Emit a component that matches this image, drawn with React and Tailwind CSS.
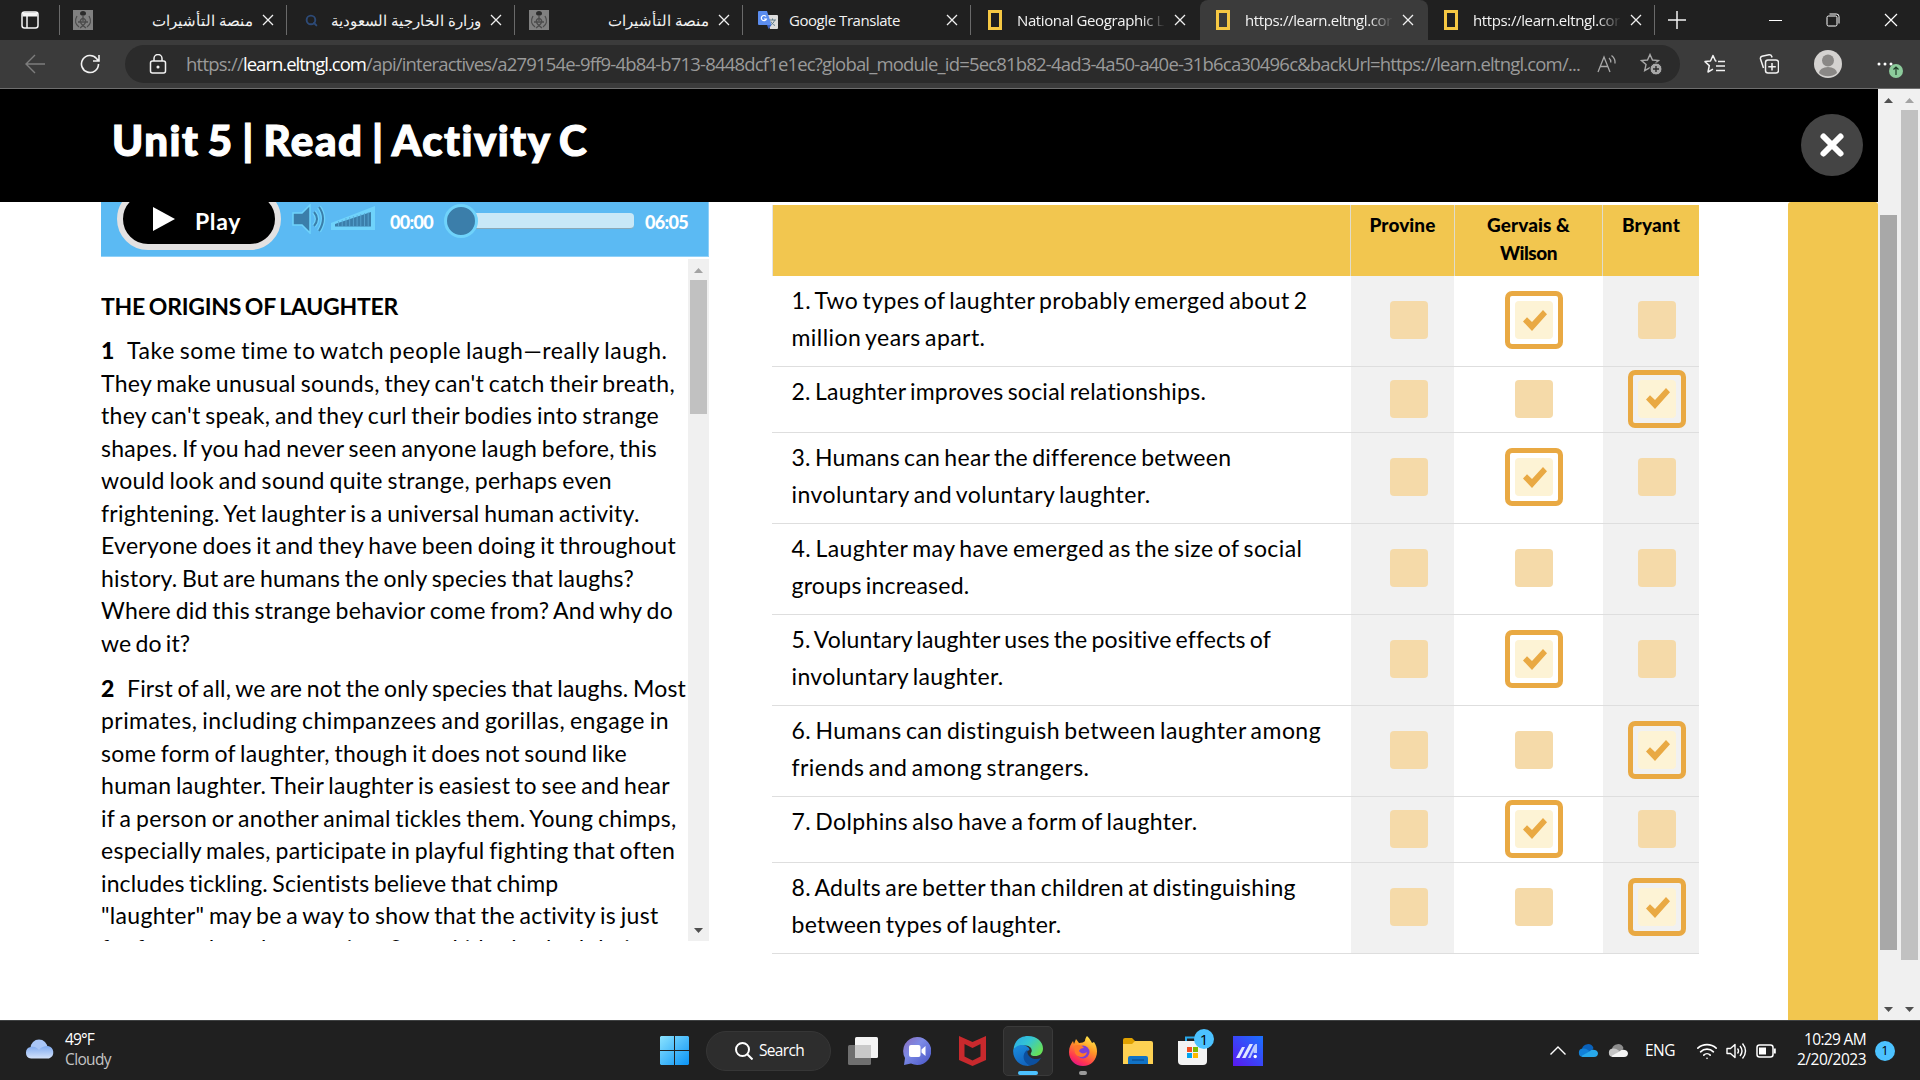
import { useLayoutEffect, useRef, useState } from "react";
import { Search, Wifi, Volume2 } from "lucide-react";

/* A single line of text tracked so that it spans exactly `w` pixels. */
function Fit({ w, children, className = "", dir }) {
  const ref = useRef(null);
  const [spacing, setSpacing] = useState(0);
  useLayoutEffect(() => {
    const natural = ref.current.getBoundingClientRect().width;
    setSpacing((w - natural) / String(children).length);
  }, []);
  return (
    <span
      ref={ref}
      dir={dir}
      className={`inline-block whitespace-pre shrink-0 ${className}`}
      style={dir === "rtl" ? undefined : { letterSpacing: spacing }}
    >
      {children}
    </span>
  );
}

function Cross({ className = "" }) {
  return (
    <svg viewBox="0 0 12 12" className={`size-3 shrink-0 ${className}`} fill="none" stroke="#f0f0f0" strokeWidth="1.3">
      <path d="M1 1 11 11M11 1 1 11" />
    </svg>
  );
}

function Emblem() {
  return (
    <svg viewBox="0 0 20 20" className="size-5 shrink-0">
      <rect width="20" height="20" fill="#808080" />
      <path d="M10 1c2 0 3 1 3 2.500s-1 2-3 2-3-.5-3-2S8 1 10 1Z" fill="#2b2b2b" />
      <path d="M10 5v6M4 6c-3 5-1 9 2 11M16 6c3 5 1 9-2 11M10 8c4 2 4 5-3 10M10 8c-4 2-4 5 3 10M5 12h10" fill="none" stroke="#4b4b4b" strokeWidth="1.300" />
    </svg>
  );
}

function GoogleTranslate() {
  return (
    <svg viewBox="0 0 20 20" className="size-5 shrink-0">
      <path d="M8 5h11a1 1 0 0 1 1 1v12a1 1 0 0 1-1 1h-7Z" fill="#dcdcdc" />
      <path d="M11 10h7M14.500 8.500V10M16.500 10c-.5 2.500-2 4-4 5M13 11.500c1 2 2 3 4 4" stroke="#607d8b" fill="none" />
      <path d="M1 1h8l4.500 14H1a1 1 0 0 1-1-1V2a1 1 0 0 1 1-1Z" fill="#5b8def" />
      <path d="M8 6.500A2.600 2.600 0 1 0 8.400 9H6" fill="none" stroke="#fff" strokeWidth="1.200" />
      <path d="m9 15 4.500 0-3 4Z" fill="#3a62c4" />
    </svg>
  );
}

const NatGeo = () => <span className="block h-5 w-[14px] border-[3px] border-[#f6c843] shrink-0" />;

function Tab({ icon, title, w, active, rtl, fade, divider = true, narrowIcon }) {
  return (
    <div className={`flex h-10 w-[228px] items-center shrink-0 ${active ? "rounded-t-lg bg-[#3b3b3b]" : ""}`}>
      <div className={`flex w-[45px] items-center ${narrowIcon ? "pl-4" : rtl ? "pl-[13px]" : "pl-[14px]"}`}>{icon}</div>
      <div className={`flex w-[148px] items-center text-[15px] leading-5 text-[#f2f2f2] ${rtl ? "justify-end text-[#cfcfcf]" : ""} ${fade ? "[mask-image:linear-gradient(to_right,#000_84%,transparent_100%)]" : ""}`}>
        <Fit w={w} dir={rtl ? "rtl" : undefined} className={rtl ? "text-[14.7px]" : ""}>{title}</Fit>
      </div>
      <Cross className="ml-[9px]" />
      {divider && <span className="ml-3 h-[30px] w-px bg-[#6a6a6a]" />}
    </div>
  );
}

function TabStrip() {
  return (
    <div className="flex h-10 items-center bg-[#202020]">
      <div className="flex w-[60px] items-center pl-[21px]">
        <svg viewBox="0 0 18 18" className="size-[18px]" fill="none" stroke="#f5f5f5" strokeWidth="1.500">
          <rect x="1" y="1" width="16" height="16" rx="2.500" />
          <path d="M1.500 3.500h15" strokeWidth="4" />
          <path d="M6 5v12" />
        </svg>
        <span className="ml-5 h-[30px] w-px bg-[#6a6a6a]" />
      </div>
      <Tab icon={<Emblem />} title="منصة التأشيرات" w={97} rtl />
      <Tab icon={<Search className="ml-1 size-[13px] text-[#2d4a77]" strokeWidth={3.5} />} title="وزارة الخارجية السعودية" w={142} rtl />
      <Tab icon={<Emblem />} title="منصة التأشيرات" w={97} rtl />
      <Tab icon={<GoogleTranslate />} title="Google Translate" w={111} />
      <Tab icon={<NatGeo />} title="National Geographic L" w={147} fade divider={false} narrowIcon />
      <Tab icon={<NatGeo />} title="https://learn.eltngl.cor" w={147} fade active divider={false} narrowIcon />
      <Tab icon={<NatGeo />} title="https://learn.eltngl.cor" w={147} fade narrowIcon />
      <svg viewBox="0 0 18 18" className="ml-3 size-[18px]" stroke="#f2f2f2" strokeWidth="1.500">
        <path d="M9 0v18M0 9h18" />
      </svg>
      <div className="ml-auto flex items-center gap-[44px] pr-[22px]">
        <span className="h-px w-[13px] bg-white" />
        <svg viewBox="0 0 14 14" className="size-[14px]" fill="none" stroke="#fff">
          <rect x="1" y="3" width="10" height="10" rx="1.500" />
          <path d="M3.500 1h7a2.500 2.500 0 0 1 2.500 2.500v7" />
        </svg>
        <svg viewBox="0 0 14 14" className="size-[14px]" fill="none" stroke="#fff" strokeWidth="1.200">
          <path d="M1 1 13 13M13 1 1 13" />
        </svg>
      </div>
    </div>
  );
}

const STAR = "M10 1.500 12.500 7l6 .6-4.500 4 1.300 6L10 14.600 4.700 17.600l1.300-6-4.500-4 6-.6Z";

function Toolbar() {
  return (
    <div className="flex h-[49px] items-center border-b border-[#6e6e6e] bg-[#3b3b3b] pb-px">
      <svg viewBox="0 0 20 20" className="ml-[25px] size-5" fill="none" stroke="#7d7d7d" strokeWidth="1.400">
        <path d="M20 10H1M10 1 1 10l9 9" />
      </svg>
      <svg viewBox="0 0 20 20" className="ml-[35px] size-5" fill="none" stroke="#f2f2f2" strokeWidth="1.600">
        <path d="M18.500 10a8.500 8.500 0 1 1-2-5.500L18.500 7M19 1v6h-6" />
      </svg>
      <div className="ml-[25px] flex h-[38px] w-[1555px] items-center rounded-full bg-[#2b2b2b] pl-[24px]">
        <svg viewBox="0 0 18 20" className="h-5 w-[18px]" fill="none" stroke="#f2f2f2" strokeWidth="1.500">
          <rect x="1.500" y="7" width="15" height="12" rx="2" />
          <path d="M5 7V4.500a4 4 0 0 1 8 0V7" />
          <circle cx="9" cy="13" r=".8" fill="#fff" />
        </svg>
        <div className="ml-[19px] flex text-[18.500px] leading-6 text-[#9a9a9a]">
          <Fit w={57}>https://</Fit>
          <Fit w={123} className="text-white">learn.eltngl.com</Fit>
          <Fit w={1214}>/api/interactives/a279154e-9ff9-4b84-b713-8448dcf1e1ec?global_module_id=5ec81b82-4ad3-4a50-a40e-31b6ca30496c&backUrl=https://learn.eltngl.com/...</Fit>
        </div>
        <svg viewBox="0 0 20 20" className="ml-[17px] size-5" fill="none" stroke="#a8a8a8" strokeWidth="1.300">
          <path d="m1 18 6-15 6 15M3 12.500h8M12 4q2 1.500 1.800 4.500M14.500 1.500q4 3 3.500 8" />
        </svg>
        <svg viewBox="0 0 22 22" className="ml-[23px] size-[22px]" fill="none" stroke="#a8a8a8" strokeWidth="1.400">
          <path d={STAR} />
          <circle cx="16" cy="16" r="6" fill="#a8a8a8" stroke="#2b2b2b" strokeWidth="1" />
          <path d="M16 13v6M13 16h6" stroke="#2b2b2b" />
        </svg>
      </div>
      <svg viewBox="0 0 22 20" className="ml-6 h-5 w-[22px]" fill="none" stroke="#f2f2f2" strokeWidth="1.500" strokeLinejoin="round">
        <path d="M12.500 7 11.500 7 9 1.500 6.500 7l-5.500.6 4.300 4L4 18l5-2.800M14 7.500h7M12 12h9M12 16.500h9" />
      </svg>
      <svg viewBox="0 0 20 20" className="ml-[33px] size-5" fill="none" stroke="#f2f2f2" strokeWidth="1.500">
        <rect x="6.500" y="6" width="13" height="13" rx="2.500" />
        <path d="M13 9v7.500M9.300 12.700h7.500M4.500 14 1.500 5q-.5-2 1.500-2.800L10 .8q2-.3 2.800 1.700L13 3.500" />
      </svg>
      <svg viewBox="0 0 28 28" className="ml-[35px] size-7">
        <circle cx="14" cy="14" r="14" fill="#d4d2d0" />
        <circle cx="14" cy="10.500" r="6" fill="#8a8886" />
        <path d="M5 23a9 6 0 0 1 18 0 14 14 0 0 1-18 0Z" fill="#8a8886" />
      </svg>
      <svg viewBox="0 0 28 30" className="ml-[34px] h-[30px] w-7">
        <circle cx="3" cy="15" r="1.500" fill="#fff" />
        <circle cx="9" cy="15" r="1.500" fill="#fff" />
        <circle cx="15" cy="15" r="1.500" fill="#fff" />
        <circle cx="20" cy="22" r="7" fill="#8ccb9b" />
        <path d="M20 26v-8M17.500 20.500 20 18l2.500 2.500" stroke="#1f3d28" strokeWidth="1.200" fill="none" />
      </svg>
    </div>
  );
}

const PARA_ONE = [
  ["They make unusual sounds, they can't catch their breath,", 574],
  ["they can't speak, and they curl their bodies into strange", 558],
  ["shapes. If you had never seen anyone laugh before, this", 556],
  ["would look and sound quite strange, perhaps even", 511],
  ["frightening. Yet laughter is a universal human activity.", 539],
  ["Everyone does it and they have been doing it throughout", 575],
  ["history. But are humans the only species that laughs?", 533],
  ["Where did this strange behavior come from? And why do", 572],
  ["we do it?", 89],
];

const PARA_TWO = [
  ["primates, including chimpanzees and gorillas, engage in", 568],
  ["some form of laughter, though it does not sound like", 526],
  ["human laughter. Their laughter is easiest to see and hear", 569],
  ["if a person or another animal tickles them. Young chimps,", 576],
  ["especially males, participate in playful fighting that often", 574],
  ["includes tickling. Scientists believe that chimp", 458],
  ["\"laughter\" may be a way to show that the activity is just", 558],
  ["for fun and can be amusing. Some kids also had their", 538],
];

function Paragraph({ n, first, firstWidth, lines }) {
  return (
    <div>
      <div className="flex h-[32.5px]">
        <span className="w-[26px] font-black">{n}</span>
        <Fit w={firstWidth}>{first}</Fit>
      </div>
      {lines.map(([t, w]) => (
        <div key={t} className="h-[32.5px]"><Fit w={w}>{t}</Fit></div>
      ))}
    </div>
  );
}

const Up = ({ color = "#505050" }) => (
  <svg viewBox="0 0 9 5" className="h-[5px] w-[9px]" fill={color}><path d="M4.500 0 9 5H0Z" /></svg>
);
const Down = () => (
  <svg viewBox="0 0 9 5" className="h-[5px] w-[9px]" fill="#505050"><path d="M0 0h9L4.500 5Z" /></svg>
);

function Player() {
  return (
    <div className="flex h-[55px] w-[608px] overflow-hidden border-b border-r border-[#8fd0f8] bg-[#5bbaf3]">
      <div className="-mt-[14px] ml-4 flex h-[62px] w-[164px] shrink-0 items-center rounded-[31px] border-[6px] border-[#e3e1e1] bg-black pl-[30px]">
        <svg viewBox="0 0 22 24" className="h-6 w-[22px]" fill="#fff"><path d="M0 0 22 12 0 24Z" /></svg>
        <Fit w={46} className="ml-5 mt-1 text-[23px] font-bold leading-7 text-white">Play</Fit>
      </div>
      <svg viewBox="0 0 34 30" className="ml-[11px] mt-[2px] h-[30px] w-[34px] shrink-0">
        <g stroke="#6fd3fb" strokeWidth="1.500" fill="#3b7eaa">
          <path d="M1 9h9L18 1v28l-8-8H1Z" />
        </g>
        <g fill="none" stroke="#6fd3fb" strokeWidth="4.500">
          <path d="M22 8q6 7 0 14M27 3q8 11 0 24" />
        </g>
        <g fill="none" stroke="#3b7eaa" strokeWidth="2">
          <path d="M22 8q6 7 0 14M27 3q8 11 0 24" />
        </g>
      </svg>
      <svg viewBox="0 0 44 24" className="ml-[5px] mt-1 h-6 w-11 shrink-0">
        <path d="M0 17 44 0v24H0Z" fill="#6fd3fb" />
        <path d="M4 18 40 6v14.500H4Z" fill="#3b7eaa" />
        <path d="M7.500 15v6M11.200 14v7M15 12v9M18.700 11v10M22.400 10v11M26.100 9v12M29.800 8v13M33.500 7v14M37.200 6v15" stroke="#5aa9d6" strokeWidth=".8" />
      </svg>
      <Fit w={43} className="ml-[15px] mt-2 text-[18px] font-black leading-6 text-white">00:00</Fit>
      <div className="ml-[11px] flex h-[37px] w-[190px] shrink-0 items-center">
        <span className="z-10 size-[34px] shrink-0 rounded-full border-[3px] border-[#6fd3fb] bg-[#3b7eaa]" />
        <span className="-ml-3 h-[16px] grow rounded-r-[4px] border-b border-[#8aa9b8] bg-[#c8e8f7]" />
      </div>
      <Fit w={43} className="ml-[11px] mt-2 text-[18px] font-black leading-6 text-white">06:05</Fit>
    </div>
  );
}

function Reading() {
  return (
    <section className="ml-[101px] w-[608px] shrink-0">
      <Player />
      <div className="mt-[2px] flex h-[682px] justify-between overflow-hidden text-[23px] leading-[32.5px] text-black">
        <div className="h-[682px] w-[587px] overflow-hidden pt-[30.500px] [word-spacing:-1.5px]">
          <div className="h-[32.5px]"><Fit w={297} className="font-bold">THE ORIGINS OF LAUGHTER</Fit></div>
          <div className="mt-[12px] flex flex-col gap-[12.6px]">
            <Paragraph n="1" first="Take some time to watch people laugh—really laugh." firstWidth={541} lines={PARA_ONE} />
            <Paragraph n="2" first="First of all, we are not the only species that laughs. Most" firstWidth={559} lines={PARA_TWO} />
          </div>
        </div>
        <div className="flex w-[21px] flex-col items-center bg-[#f0f0f0]">
          <div className="flex h-[21px] items-center pt-[2px]"><Up color="#a3a3a3" /></div>
          <div className="h-[134px] w-[17px] bg-[#c1c1c1]" />
          <div className="mt-auto flex h-[21px] items-center pb-px"><Down /></div>
        </div>
      </div>
    </section>
  );
}

const QUESTIONS = [
  { lines: [["1. Two types of laughter probably emerged about 2", 516], ["million years apart.", 194]], pick: 1 },
  { lines: [["2. Laughter improves social relationships.", 415]], pick: 2 },
  { lines: [["3. Humans can hear the difference between", 439], ["involuntary and voluntary laughter.", 359]], pick: 1 },
  { lines: [["4. Laughter may have emerged as the size of social", 511], ["groups increased.", 178]], pick: -1 },
  { lines: [["5. Voluntary laughter uses the positive effects of", 479], ["involuntary laughter.", 212]], pick: 1 },
  { lines: [["6. Humans can distinguish between laughter among", 530], ["friends and among strangers.", 298]], pick: 2 },
  { lines: [["7. Dolphins also have a form of laughter.", 406]], pick: 1 },
  { lines: [["8. Adults are better than children at distinguishing", 504], ["between types of laughter.", 270]], pick: 2 },
];

function Box({ on }) {
  if (!on) return <span className="size-[38px] rounded-[4px] bg-[#f5daa9]" />;
  return (
    <span className="flex size-[58px] items-center justify-center rounded-[7px] border-[5px] border-[#e9a943]">
      <span className="flex size-[38px] items-center justify-center rounded-[4px] bg-[#fdf3d5]">
        <svg viewBox="0 0 24 21" className="ml-[2px] h-[21px] w-6" fill="#e9a943">
          <path d="m0 11.500 4-4.200L9 12 20 0l4 4.200L9 21Z" />
        </svg>
      </span>
    </span>
  );
}

const COLUMNS = "grid grid-cols-[578px_104px_148px_97px]";

function Quiz() {
  return (
    <section className="ml-[63px] mt-[3px] w-[927px] shrink-0 text-black">
      <div className={`${COLUMNS} h-[71px] bg-[#f2c64f] text-center text-[19px] font-black leading-7`}>
        <div className="border-l border-[#e4e4e4]" />
        <div className="border-l border-[#e0dccb] pt-[6px]"><Fit w={66}>Provine</Fit></div>
        <div className="border-l border-[#e0dccb] pt-[6px]"><Fit w={83}>Gervais &</Fit><br /><Fit w={57}>Wilson</Fit></div>
        <div className="border-l border-[#e0dccb] pt-[6px]"><Fit w={58}>Bryant</Fit></div>
      </div>
      {QUESTIONS.map(({ lines, pick }) => (
        <div key={lines[0][0]} className={`${COLUMNS} border-b border-[#dedede] ${lines.length === 2 ? "h-[91px]" : "h-[66px]"}`}>
          <div className="pl-[19.500px] pt-[6px] text-[23px] leading-[37px] [word-spacing:-2px]">
            {lines.map(([t, w]) => <div key={t} className="h-[37px]"><Fit w={w}>{t}</Fit></div>)}
          </div>
          {[0, 1, 2].map((c) => (
            <div key={c} className={`flex items-center justify-center pb-[2px] pl-3 ${c === 1 ? "" : "border-l border-white bg-[#f1f1f1]"}`}>
              <Box on={pick === c} />
            </div>
          ))}
        </div>
      ))}
    </section>
  );
}

function Page() {
  return (
    <div className="flex h-[931px]">
      <main className="flex h-[931px] w-[1878px] flex-col overflow-hidden bg-white font-['Lato',sans-serif]">
        <header className="flex h-[113px] shrink-0 justify-between bg-black">
          <Fit w={477} className="ml-[112px] mt-[26px] text-[42px] font-black leading-[50px] text-white [-webkit-text-stroke:1.2px_white] [word-spacing:-3px]">Unit 5 | Read | Activity C</Fit>
          <button className="mr-[15px] mt-[25px] flex size-[62px] items-center justify-center rounded-full bg-[#444]">
            <svg viewBox="0 0 26 26" className="size-[26px]" fill="none" stroke="#fff" strokeWidth="6" strokeLinecap="round">
              <path d="M4.500 4.500 21.500 21.500M21.500 4.500 4.500 21.500" />
            </svg>
          </button>
        </header>
        <div className="flex h-[818px]">
          <Reading />
          <Quiz />
          <div className="ml-auto h-[818px] w-[90px] rounded-t-[3px] bg-[#f2c64f]" />
        </div>
      </main>
      <div className="flex w-[21px] flex-col items-center bg-[#f0f0f0]">
        <div className="flex h-[21px] items-center pt-[2px]"><Up /></div>
        <div className="mt-[105px] h-[735px] w-[17px] bg-[#a8a8a8]" />
        <div className="mt-auto flex h-[21px] items-center"><Down /></div>
      </div>
      <div className="flex w-[21px] flex-col items-center bg-[#f0f0f0]">
        <div className="flex h-[21px] items-center pt-[2px]"><Up color="#a3a3a3" /></div>
        <div className="h-[850px] w-[17px] bg-[#c1c1c1]" />
        <div className="mt-auto flex h-[21px] items-center"><Down /></div>
      </div>
    </div>
  );
}

function Taskbar() {
  return (
    <footer className="flex h-[60px] border-t border-[#3f4142] bg-[#202020] text-[15.500px] text-white">
      <div className="flex w-[660px] items-center pl-[25px]">
        <svg viewBox="0 0 30 20" className="mb-[3px] h-5 w-[30px]">
          <defs>
            <linearGradient id="cloud" x2="0" y2="1"><stop stopColor="#7faaf0" /><stop offset="1" stopColor="#d3e2fb" /></linearGradient>
          </defs>
          <circle cx="14" cy="9" r="8.500" fill="#a9c6f7" />
          <path d="M6 8c4-1 6 1 8 3 2-3 5-4 9-4a6.500 6.500 0 0 1 1 12.500H6A5.800 5.800 0 0 1 6 8Z" fill="url(#cloud)" />
        </svg>
        <div className="mb-[3px] ml-[10px] flex flex-col items-start leading-5">
          <Fit w={29}>49°F</Fit>
          <Fit w={46} className="text-[#c4c4c4]">Cloudy</Fit>
        </div>
      </div>
      <div className="flex items-center">
        <svg viewBox="0 0 29 29" className="size-[29px]">
          <defs>
            <linearGradient id="win" x2="1" y2="1"><stop stopColor="#8be3ff" /><stop offset="1" stopColor="#0a93f5" /></linearGradient>
          </defs>
          <path d="M1 0h13v14H0V1Zm14 0h13l1 1v13H15ZM0 15h14v14H1l-1-1Zm15 0h14v13l-1 1H15Z" fill="url(#win)" />
        </svg>
        <div className="ml-[17px] flex h-10 w-[125px] items-center rounded-full border border-[#363636] bg-[#2d2d2d] pl-7">
          <svg viewBox="0 0 18 18" className="size-[18px]" fill="none" stroke="#fff" strokeWidth="2">
            <circle cx="7.500" cy="7.500" r="6.500" /><path d="m12 12 5.500 5.500" />
          </svg>
          <Fit w={45} className="ml-[6px]">Search</Fit>
        </div>
        <svg viewBox="0 0 30 28" className="ml-[17px] h-7 w-[30px]">
          <rect x="7" width="23" height="21" rx="1.500" fill="#f4f4f4" />
          <rect y="8" width="23" height="20" rx="1.500" fill="#6f6f6f" />
          <path d="M7 8h16v13H7Z" fill="#c9c9c9" />
        </svg>
        <svg viewBox="0 0 28 28" className="ml-[25px] size-7">
          <defs>
            <linearGradient id="chat" x2="1" y2="1"><stop stopColor="#8b68b8" /><stop offset=".4" stopColor="#7d8be6" /><stop offset="1" stopColor="#4653c6" /></linearGradient>
          </defs>
          <path d="M14 0a14 14 0 1 1-6 26.500L1 28l1-7A14 14 0 0 1 14 0Z" fill="url(#chat)" />
          <rect x="6" y="8" width="11.500" height="12" rx="2" fill="#fff" />
          <path d="m18.500 12.500 4-3.500v10l-4-3.500Z" fill="#fff" />
        </svg>
        <svg viewBox="0 0 27 30" className="ml-[28px] h-[30px] w-[27px]">
          <path d="M0 0 13.500 6 27 0v24l-13.500 6L0 24ZM5.500 8v12.500l8 4 8-4V8l-8 4Z" fill="#c8292d" fillRule="evenodd" />
        </svg>
        <div className="ml-[17px] flex h-[50px] w-[50px] flex-col items-center rounded-[5px] border border-[#3a3a3a] bg-[#2d2d2d] pt-[9px]">
          <svg viewBox="0 0 30 30" className="size-[30px] shrink-0">
            <defs>
              <linearGradient id="edgeTop" x2="1" y2=".6"><stop stopColor="#2aa7e8" /><stop offset=".5" stopColor="#34c6d4" /><stop offset="1" stopColor="#66e05a" /></linearGradient>
              <linearGradient id="edgeLow" x2=".4" y2="1"><stop stopColor="#1b8fe0" /><stop offset="1" stopColor="#1266c0" /></linearGradient>
            </defs>
            <path d="M.5 14C1 5 7 0 15 0c9 0 15 6 15 12.500 0 5-3.500 7.500-8 7.500-3.500 0-5-1.500-4-3 2-3 0-7-5-7.500C8 9 3 11 .5 14Z" fill="url(#edgeTop)" />
            <path d="M.2 14C3 9.500 8 8 12 9.500c3 1 4.500 3 4.500 4.500-5 1-6.500 9 2.500 14-2 2-4 2-6 1.800C5 29-.5 22 .2 14Z" fill="url(#edgeLow)" />
            <path d="M14.500 13.500C8 18 10 27 17 29.500c5-.5 8.500-3 11-7.500-6 3-15-.5-13.500-8.500Z" fill="#0c4f9e" />
          </svg>
          <span className="mt-[5px] h-1 w-5 rounded-full bg-[#4cc2ff]" />
        </div>
        <div className="ml-4 flex h-[50px] w-[28px] flex-col items-center pt-[10px]">
          <svg viewBox="0 0 28 30" className="h-[30px] w-7 shrink-0">
            <defs>
              <linearGradient id="fox" x1=".8" y1="0" x2=".3" y2="1"><stop stopColor="#fff04f" /><stop offset=".4" stopColor="#ff9a26" /><stop offset=".8" stopColor="#ff3650" /><stop offset="1" stopColor="#e31587" /></linearGradient>
            </defs>
            <path d="M18 0c3 3 4 5 5 7l2-1c2 3 3 6 3 9.500C28 24 22 30 14 30S0 24 0 16C0 11 2 8 4 5l1 3 2-5 3 4c3 0 5-1 6-2 0-2 1-4 2-5Z" fill="url(#fox)" />
            <circle cx="14" cy="16" r="6.500" fill="#7a3fd6" />
            <path d="M5 10c4-2 8-1 10 2-3 0-4 1-5 3 2 3 5 3 8 1-1 6-9 7-12 1Z" fill="#ff7a2a" />
          </svg>
          <span className="mt-[5px] h-1 w-2 shrink-0 rounded-full bg-[#9a9a9a]" />
        </div>
        <svg viewBox="0 0 30 26" className="ml-[26px] h-[26px] w-[30px]">
          <path d="M0 2q0-2 2-2h7l3 3v6H0Z" fill="#e0a100" />
          <path d="M0 6h9l3-3h16q2 0 2 2v21H0Z" fill="#fdd153" />
          <path d="M5 26v-6q0-2 2-2h16q2 0 2 2v6Z" fill="#1173c7" />
          <path d="M9 22h12" stroke="#0b4f91" strokeWidth="1.300" />
        </svg>
        <div className="relative ml-[25px] h-[29px] w-[29px]">
          <svg viewBox="0 0 29 29" className="size-[29px]">
            <path d="M8 6V1.500h13V6" fill="none" stroke="#29a8ea" strokeWidth="2" />
            <path d="M0 5h29v20q0 4-4 4H4q-4 0-4-4Z" fill="#f3f3f3" />
            <path d="M9 11h5v5H9Z" fill="#f25022" /><path d="M15 11h5v5h-5Z" fill="#7fba00" />
            <path d="M9 17h5v5H9Z" fill="#00a4ef" /><path d="M15 17h5v5h-5Z" fill="#ffb900" />
          </svg>
          <span className="absolute -right-[7px] -top-[7px] flex size-5 items-center justify-center rounded-full bg-[#4cc2ff] text-[15px] leading-none text-black">1</span>
        </div>
        <svg viewBox="0 0 30 30" className="ml-[26px] size-[30px]">
          <defs>
            <linearGradient id="asus" x1="1" y1="0" x2="0" y2="1"><stop stopColor="#1a72ff" /><stop offset="1" stopColor="#5a18f0" /></linearGradient>
          </defs>
          <rect width="30" height="30" fill="url(#asus)" />
          <path d="M3 22 9 11h3L6.500 22ZM9 22l7.500-14H20l-7.500 14Z" fill="#dfe6ff" />
          <path d="M15 22 21 9.500 22.500 8H24v9h-3.500v-2L17.500 22Z" fill="#b9c9ff" />
          <circle cx="22.200" cy="20.500" r="1.700" fill="#fff" />
        </svg>
      </div>
      <div className="ml-auto flex items-center pr-[25px]">
        <svg viewBox="0 0 16 9" className="h-[9px] w-4" fill="none" stroke="#fff" strokeWidth="1.400"><path d="m.5 8.500 7.500-7.500 7.500 7.500" /></svg>
        <svg viewBox="0 0 20 13" className="ml-3 h-[13px] w-5">
          <path d="M4 5a6 6 0 0 1 11.500-1l-3 5L3 10Z" fill="#0a62bb" />
          <path d="M4.500 4.500c3-.5 5 1 7 2.500l-7 6A4.300 4.300 0 0 1 4.500 4.500Z" fill="#1180d8" />
          <path d="M3.500 12 12 7c2-2 7-2 8 2q0 4-4 4H4.500Z" fill="#28a8ea" />
        </svg>
        <svg viewBox="0 0 20 13" className="ml-[10px] h-[13px] w-5">
          <path d="M4 5a6 6 0 0 1 11.500-1l-3 5L3 10Z" fill="#8c8c8c" />
          <path d="M4.500 4.500c3-.5 5 1 7 2.500l-7 6A4.300 4.300 0 0 1 4.500 4.500Z" fill="#c4c4c4" />
          <path d="M3.500 12 12 7c2-2 7-2 8 2q0 4-4 4H4.500Z" fill="#f4f4f4" />
        </svg>
        <Fit w={30} className="ml-[17px]">ENG</Fit>
        <Wifi className="ml-[21px] size-[22px]" strokeWidth={1.8} />
        <svg viewBox="0 0 21 18" className="ml-2 h-[18px] w-[21px]" fill="none" stroke="#fff" strokeWidth="1.400" strokeLinejoin="round">
          <path d="M1 6.500h3.500L9 2.500v13l-4.500-4H1ZM11.500 6.500q2 2.500 0 5M14 4q4 5 0 10M16.500 1.500q6 7.500 0 15" />
        </svg>
        <svg viewBox="0 0 20 14" className="ml-[9px] h-[14px] w-5" fill="none" stroke="#fff" strokeWidth="1.500">
          <rect x="1" y="1" width="16" height="12" rx="2.500" />
          <rect x="3" y="3.500" width="7" height="7" fill="#fff" stroke="none" />
          <path d="M18.800 4.500v5" strokeWidth="2" />
        </svg>
        <div className="mb-[3px] ml-[21px] flex flex-col items-end leading-5">
          <Fit w={62}>10:29 AM</Fit>
          <Fit w={69}>2/20/2023</Fit>
        </div>
        <span className="ml-[9px] flex size-5 items-center justify-center rounded-full bg-[#4cc2ff] text-[13px] leading-none text-black">1</span>
      </div>
    </footer>
  );
}

export default function App() {
  return (
    <div className="h-[1080px] w-[1920px] overflow-hidden bg-white font-['Open_Sans','Noto_Sans',sans-serif]">
      <TabStrip />
      <Toolbar />
      <Page />
      <Taskbar />
    </div>
  );
}
